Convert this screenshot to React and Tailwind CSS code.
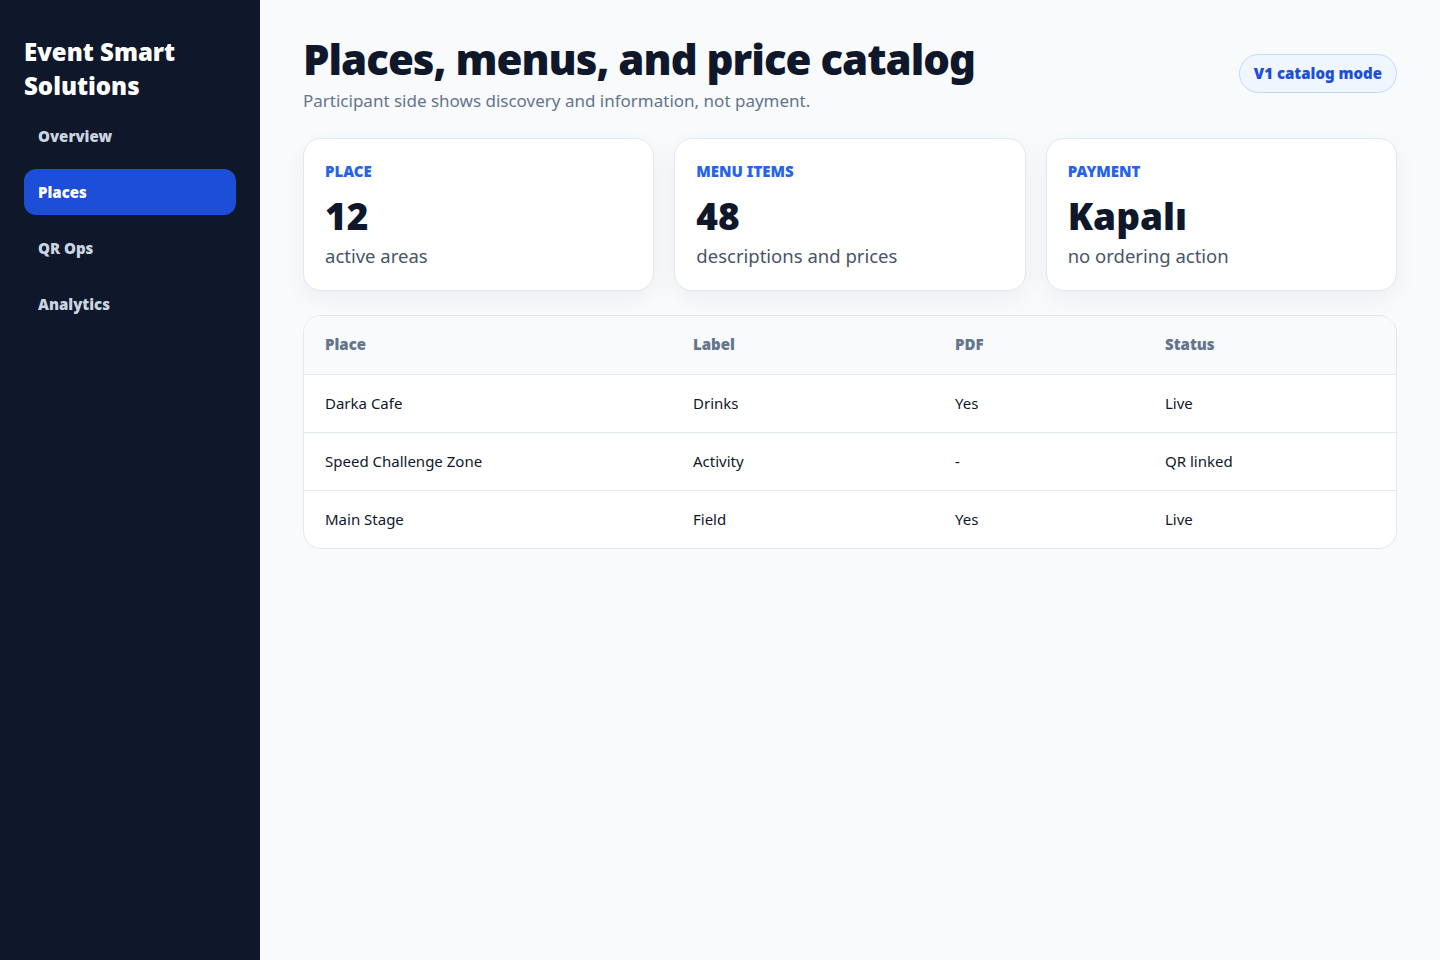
const navItems = ['Overview', 'Places', 'QR Ops', 'Analytics'];

const stats = [
  { label: 'Place', value: '12', note: 'active areas' },
  { label: 'Menu items', value: '48', note: 'descriptions and prices' },
  { label: 'Payment', value: 'Kapalı', note: 'no ordering action' },
];

const rows = [
  { place: 'Darka Cafe', label: 'Drinks', pdf: 'Yes', status: 'Live' },
  { place: 'Speed Challenge Zone', label: 'Activity', pdf: '-', status: 'QR linked' },
  { place: 'Main Stage', label: 'Field', pdf: 'Yes', status: 'Live' },
];

const cols = 'grid grid-cols-[368px_262px_210px_1fr] px-[21px]';

export default function App() {
  return (
    <div className="flex min-h-[960px] bg-[#f8fafc] font-['Noto_Sans',sans-serif]">
      {/* Sidebar */}
      <aside className="w-[260px] shrink-0 bg-[#0f172a] px-6 pt-[35px]">
        <h1 className="text-[24px] leading-[34px] font-black text-white">
          Event Smart
          <br />
          Solutions
        </h1>
        <nav className="mt-[10px] flex flex-col gap-[10px]">
          {navItems.map((item) => (
            <a
              key={item}
              className={`flex h-[46px] items-center rounded-xl px-[14px] text-[15px] font-black ${
                item === 'Places' ? 'bg-[#1d4ed8] text-white' : 'text-[#cbd5e1]'
              }`}
            >
              {item}
            </a>
          ))}
        </nav>
      </aside>

      {/* Main */}
      <main className="flex-1 px-[43px] pt-[33px]">
        <div className="flex items-start justify-between">
          <div>
            <h2 className="text-[42px] leading-[52px] font-black tracking-[-1px] text-[#0f172a]">
              Places, menus, and price catalog
            </h2>
            <p className="mt-[3px] text-[17px] text-[#64748b]">
              Participant side shows discovery and information, not payment.
            </p>
          </div>
          <span className="mt-[21px] flex h-[39px] items-center rounded-full border border-[#bfdbfe] bg-[#eff6ff] px-[14px] text-[15px] font-black text-[#1d4ed8]">
            V1 catalog mode
          </span>
        </div>

        <div className="mt-[24px] grid grid-cols-3 gap-5">
          {stats.map((s) => (
            <div
              key={s.label}
              className="h-[153px] rounded-[18px] border border-[#e2e8f0] bg-white px-[21px] pt-[21px] shadow-[0_8px_24px_rgba(15,23,42,0.05)]"
            >
              <div className="text-[15px] leading-[22px] font-black uppercase text-[#2563eb]">{s.label}</div>
              <div className="mt-[11px] text-[37px] leading-[46px] font-black text-[#0f172a]">{s.value}</div>
              <div className="mt-[4px] text-[18.5px] leading-[26px] text-[#475569]">{s.note}</div>
            </div>
          ))}
        </div>

        <div className="mt-[24px] overflow-hidden rounded-[18px] border border-[#e2e8f0] bg-white">
          <div className={`${cols} h-[58px] items-center bg-[#f8fafc] text-[15px] font-black text-[#64748b]`}>
            <div>Place</div>
            <div>Label</div>
            <div>PDF</div>
            <div>Status</div>
          </div>
          {rows.map((r) => (
            <div
              key={r.place}
              className={`${cols} h-[58px] items-center border-t border-[#e2e8f0] text-[15px] text-[#0f172a]`}
            >
              <div>{r.place}</div>
              <div>{r.label}</div>
              <div>{r.pdf}</div>
              <div>{r.status}</div>
            </div>
          ))}
        </div>
      </main>
    </div>
  );
}
